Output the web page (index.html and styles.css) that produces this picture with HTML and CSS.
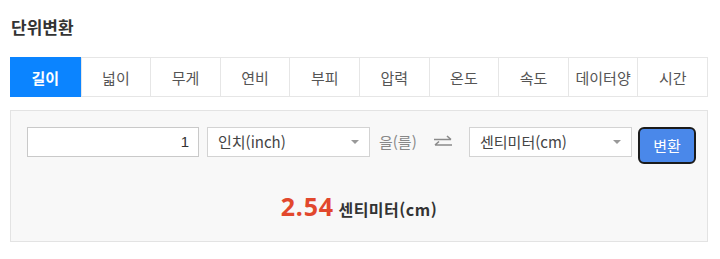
FILE: index.html
```html
<!DOCTYPE html>
<html lang="ko">
<head>
<meta charset="utf-8">
<link rel="stylesheet" href="styles.css">
</head>
<body>
<div class="wrap">
  <h1 class="title">단위변환</h1>
  <div class="tabs">
    <div class="tab active">길이</div>
    <div class="tab">넓이</div>
    <div class="tab">무게</div>
    <div class="tab">연비</div>
    <div class="tab">부피</div>
    <div class="tab">압력</div>
    <div class="tab">온도</div>
    <div class="tab">속도</div>
    <div class="tab">데이터양</div>
    <div class="tab">시간</div>
  </div>
  <div class="panel">
    <div class="row">
      <div class="input">1</div>
      <div class="select"><span>인치(inch)</span><span class="caret"></span></div>
      <span class="particle">을(를)</span>
      <svg class="swap" width="20" height="14" viewBox="0 0 20 14">
        <path d="M1 4.5H18M14 1L18 4.5" fill="none" stroke="#8a8a8a" stroke-width="1.6"/>
        <path d="M19 10H2M6 6.5L2 10" fill="none" stroke="#8a8a8a" stroke-width="1.6"/>
      </svg>
      <div class="select"><span>센티미터(cm)</span><span class="caret"></span></div>
      <div class="btn">변환</div>
    </div>
    <div class="result"><span class="num">2.54</span> <span class="unit">센티미터(cm)</span></div>
  </div>
</div>
</body>
</html>
```
FILE: styles.css
```css
* { box-sizing: border-box; }
body {
  margin: 0;
  background: #fff;
  font-family: "Noto Sans CJK KR", "Noto Sans", sans-serif;
  color: #333;
}
.wrap {
  width: 720px;
  padding: 0 12px 0 10px;
}
.title {
  margin: 0;
  height: 57px;
  padding-top: 15px;
  padding-left: 1px;
  font-size: 17px;
  line-height: 24px;
  font-weight: 700;
  color: #333;
}
.tabs {
  display: grid;
  grid-template-columns: repeat(10, 1fr);
  height: 40px;
  border: 1px solid #e6e6e6;
}
.tab {
  display: flex;
  align-items: center;
  justify-content: center;
  font-size: 15px;
  color: #555;
  border-left: 1px solid #e6e6e6;
  white-space: nowrap;
}
.tab:first-child { border-left: none; }
.tab.active {
  background: #0b84ff;
  color: #fff;
  font-weight: 700;
  margin: -1px 0 -1px -1px;
}
.panel {
  margin-top: 13px;
  height: 132px;
  border: 1px solid #e3e3e3;
  background: #f8f8f8;
  padding: 16px 0 0 16px;
}
.row {
  display: flex;
  align-items: flex-start;
}
.row > * { flex-shrink: 0; }
.input {
  width: 172px;
  height: 30px;
  border: 1px solid #c9c9c9;
  background: #fff;
  text-align: right;
  padding-right: 9px;
  font-family: "Liberation Sans", Arial, sans-serif;
  font-size: 15px;
  line-height: 28px;
  color: #333;
}
.select {
  margin-left: 8px;
  width: 163px;
  height: 30px;
  border: 1px solid #d3d3d3;
  background: #fff;
  display: flex;
  align-items: center;
  justify-content: space-between;
  padding: 0 10px 0 10px;
  font-size: 15px;
  line-height: 20px;
  color: #444;
  white-space: nowrap;
}
.swap + .select { margin-left: 0; }
.caret {
  width: 0;
  height: 0;
  border-left: 4px solid transparent;
  border-right: 4px solid transparent;
  border-top: 4px solid #999;
}
.particle {
  margin-left: 9px;
  width: 41px;
  font-size: 15px;
  line-height: 30px;
  color: #888;
  white-space: nowrap;
}
.swap {
  margin: 8px 16px 0 13px;
}
.btn {
  margin-left: 6px;
  width: 58px;
  height: 37px;
  border: 2px solid #1b1b1b;
  border-radius: 6px;
  background: #4a88ea;
  color: #fff;
  font-size: 15px;
  line-height: 20px;
  display: flex;
  align-items: center;
  justify-content: center;
}
.result {
  margin-top: 30px;
  text-align: center;
  font-family: "Noto Sans", sans-serif;
  font-size: 25px;
  line-height: 24px;
  padding-right: 16px;
  white-space: nowrap;
}
.num {
  font-weight: 700;
  color: #e2482d;
  letter-spacing: 0.8px;
}
.unit {
  font-family: "Noto Sans CJK KR", sans-serif;
  font-size: 16px;
  font-weight: 700;
  color: #333;
  margin-left: -2px;
  letter-spacing: 0.5px;
}
```
